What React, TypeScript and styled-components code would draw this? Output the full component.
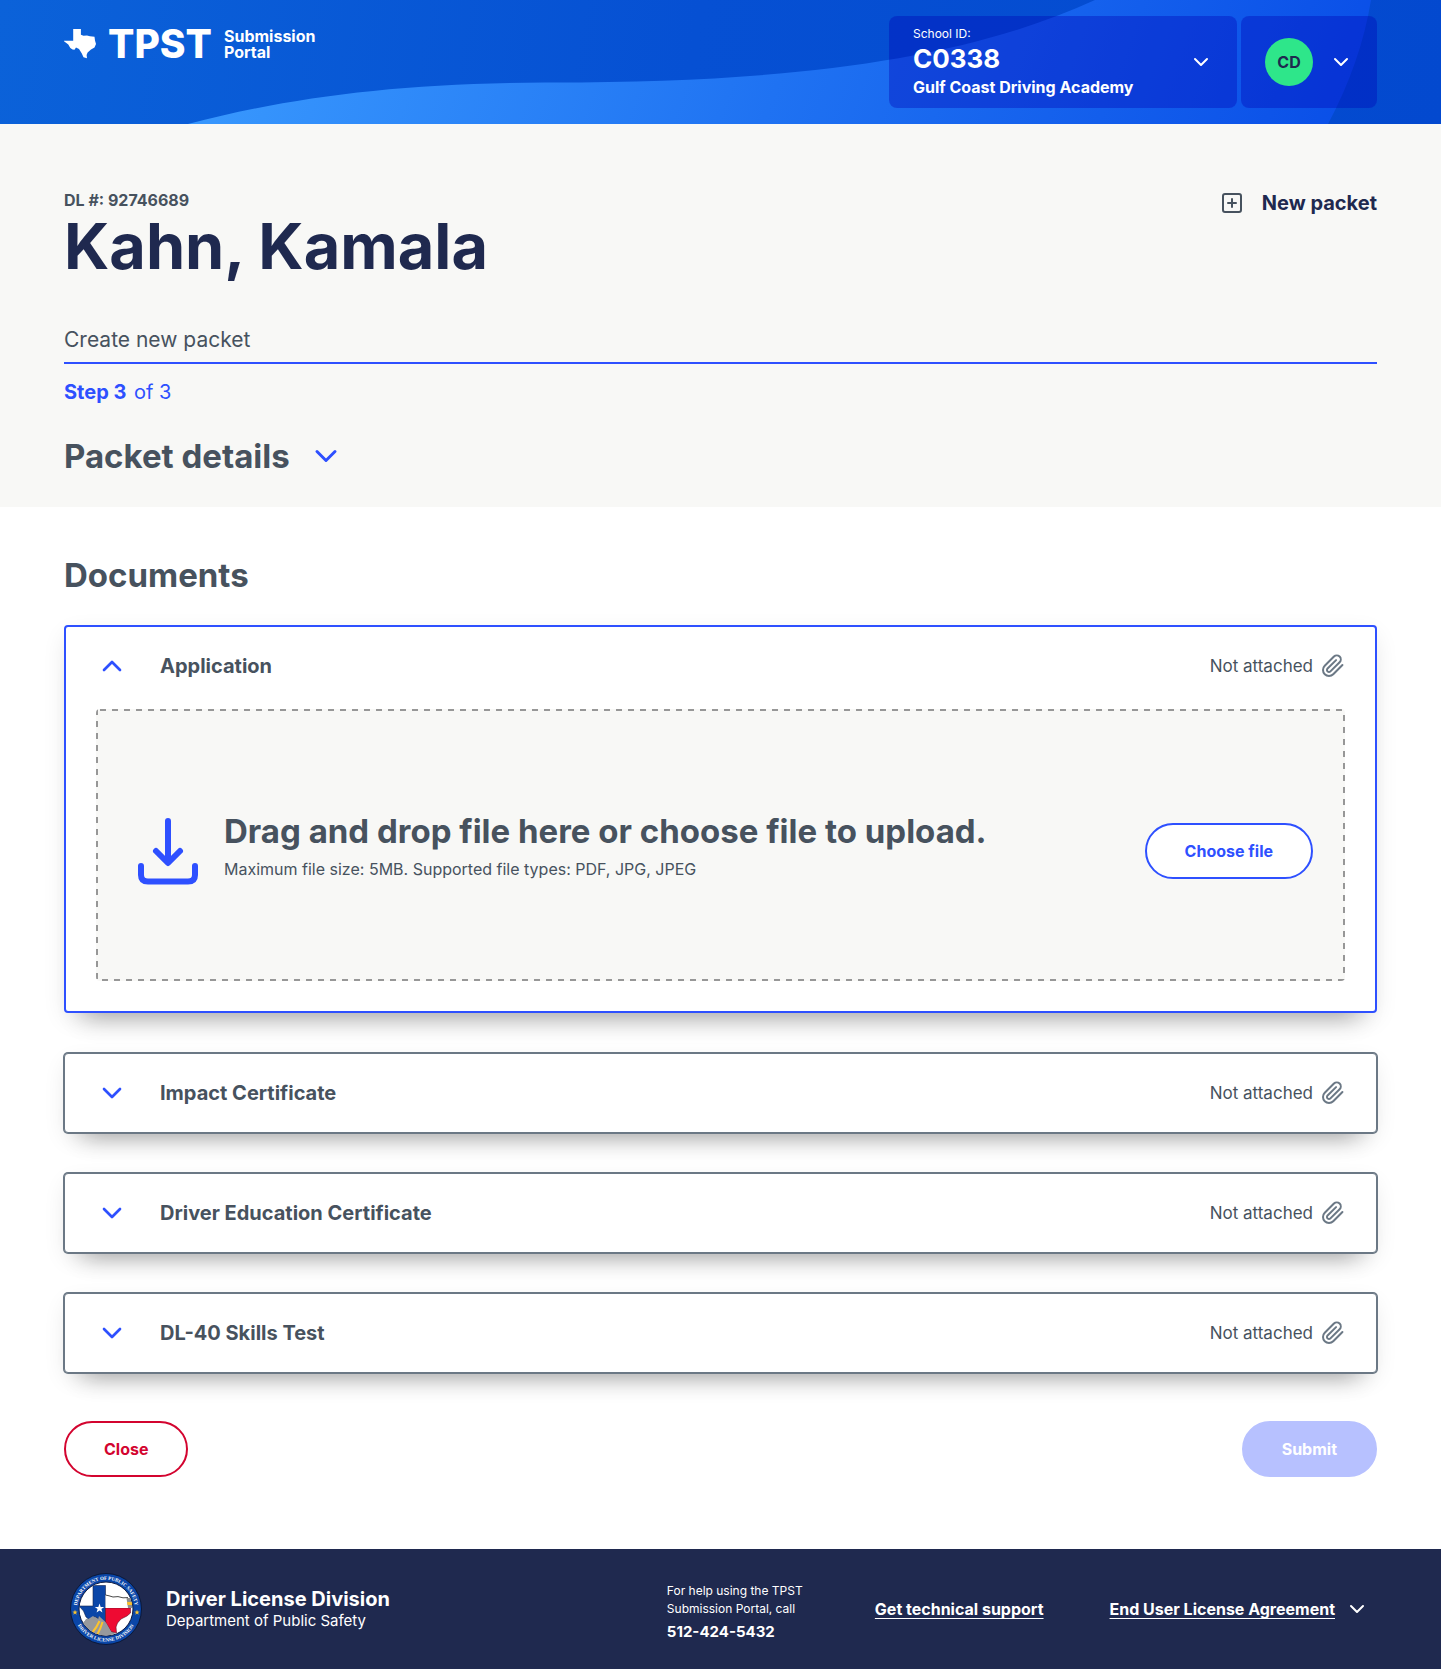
import React, { useState } from "react";
import styled, { createGlobalStyle, css } from "styled-components";
import {
  FiChevronDown,
  FiChevronUp,
  FiPaperclip,
  FiPlusSquare,
} from "react-icons/fi";

const color = {
  navy: "#1f294f",
  slate: "#47525e",
  steel: "#6b7885",
  blue: "#2e50ff",
  red: "#d3042f",
  green: "#2ee68a",
  paper: "#f8f8f6",
  dash: "#979797",
  disabled: "#b7c1ff",
};

const GlobalStyle = createGlobalStyle`
  *, *::before, *::after { box-sizing: border-box; }
  body {
    margin: 0;
    background: #fff;
    color: ${color.slate};
    font-family: Inter, "Noto Sans", "Liberation Sans", sans-serif;
    font-size: 16px;
    line-height: 24px;
  }
  h1, h2, h3, p { margin: 0; }
  button { font-family: inherit; cursor: pointer; }
`;

const Header = styled.header`
  position: relative;
  display: flex;
  justify-content: space-between;
  align-items: flex-start;
  padding: 16px 64px;
  color: #fff;
  background: linear-gradient(100deg, #0b62d9 0%, #0650d3 48%, #0349cf 100%);
`;

const Wave = styled.svg`
  position: absolute;
  inset: 0;
  width: 100%;
  height: 100%;
`;

const Brand = styled.a`
  position: relative;
  display: flex;
  align-items: center;
  gap: 12px;
  margin-top: 11px;
  color: #fff;
  text-decoration: none;
`;

const BrandName = styled.span`
  font-size: 39px;
  line-height: 34px;
  font-weight: 800;
`;

const BrandSub = styled.span`
  font-weight: 700;
  font-size: 16px;
  line-height: 16px;
`;

const HeaderMenus = styled.nav`
  position: relative;
  display: flex;
  gap: 4px;
`;

const MenuButton = styled.button<{ $width: number }>`
  display: flex;
  align-items: center;
  justify-content: space-between;
  width: ${(p) => p.$width}px;
  min-height: 92px;
  padding: 8px 24px;
  border: 0;
  border-radius: 8px;
  background: rgba(0, 0, 180, 0.35);
  color: #fff;
  text-align: left;
`;

const School = styled.span`
  display: flex;
  flex-direction: column;
`;
const SchoolLabel = styled.span`
  font-size: 12px;
  line-height: 20px;
`;
const SchoolId = styled.span`
  font-size: 26px;
  line-height: 30px;
  font-weight: 700;
`;
const SchoolName = styled.span`
  font-size: 16px;
  line-height: 26px;
  font-weight: 700;
`;

const Avatar = styled.span`
  display: grid;
  place-items: center;
  width: 48px;
  height: 48px;
  border-radius: 50%;
  background: ${color.green};
  color: ${color.navy};
  font-size: 16px;
  font-weight: 700;
`;

const Hero = styled.section`
  padding: 64px 64px 31px;
  background: ${color.paper};
`;

const HeroTop = styled.div`
  display: flex;
  justify-content: space-between;
  align-items: flex-start;
`;

const LicenseNumber = styled.p`
  font-size: 16px;
  line-height: 24px;
  font-weight: 700;
`;

const PersonName = styled.h1`
  font-size: 63px;
  line-height: 68px;
  font-weight: 700;
  color: ${color.navy};
`;

const NewPacket = styled.button`
  display: flex;
  align-items: center;
  gap: 18px;
  padding: 0;
  border: 0;
  background: none;
  font-size: 20px;
  line-height: 30px;
  font-weight: 700;
  color: ${color.navy};
  svg {
    color: ${color.slate};
  }
`;

const FlowName = styled.p`
  margin-top: 46px;
  padding-bottom: 8px;
  border-bottom: 2px solid ${color.blue};
  font-size: 21px;
  line-height: 28px;
`;

const Step = styled.p`
  margin-top: 14px;
  font-size: 20px;
  line-height: 28px;
  color: ${color.blue};
  strong {
    margin-right: 2px;
  }
`;

const SectionTitle = styled.h2`
  font-size: 33px;
  line-height: 40px;
  font-weight: 700;
`;

const DetailsToggle = styled.button`
  display: flex;
  align-items: center;
  gap: 18px;
  margin-top: 30px;
  padding: 0;
  border: 0;
  background: none;
  color: ${color.slate};
  svg {
    color: ${color.blue};
  }
`;

const Main = styled.main`
  padding: 48px 64px 72px;
`;

const Documents = styled.div`
  display: flex;
  flex-direction: column;
  gap: 40px;
  margin-top: 30px;
`;

const Card = styled.section<{ $open: boolean }>`
  border-radius: 4px;
  background: #fff;
  ${(p) =>
    p.$open
      ? css`
          border: 2px solid ${color.blue};
          padding-bottom: 30px;
          box-shadow: 0 24px 24px -20px rgba(0, 0, 0, 0.3),
            0 8px 24px -4px rgba(0, 0, 0, 0.12);
        `
      : css`
          border: 1px solid ${color.steel};
          padding: 0 1px;
          box-shadow: 0 0 0 1px ${color.steel},
            0 24px 24px -20px rgba(0, 0, 0, 0.3),
            0 8px 24px -4px rgba(0, 0, 0, 0.12);
        `}
`;

const CardHeader = styled.button`
  display: flex;
  align-items: center;
  width: 100%;
  min-height: 78px;
  padding: 0 30px;
  border: 0;
  background: none;
  color: ${color.slate};
  text-align: left;
`;

const Toggle = styled.span`
  display: flex;
  margin-right: 32px;
  color: ${color.blue};
`;

const CardTitle = styled.span`
  flex: 1;
  font-size: 20px;
  line-height: 28px;
  font-weight: 700;
`;

const Status = styled.span`
  display: flex;
  align-items: center;
  gap: 8px;
  font-size: 17px;
  svg {
    color: ${color.steel};
  }
`;

const dashX = `linear-gradient(90deg, ${color.dash} 50%, transparent 50%)`;
const dashY = `linear-gradient(180deg, ${color.dash} 50%, transparent 50%)`;

const DropZone = styled.div`
  display: flex;
  align-items: center;
  min-height: 272px;
  margin: 4px 30px 0;
  padding: 14px 32px 2px;
  border-radius: 4px;
  background-color: ${color.paper};
  background-image: ${dashX}, ${dashX}, ${dashY}, ${dashY};
  background-size: 12px 2px, 12px 2px, 2px 12px, 2px 12px;
  background-position: 4px 0, 6px 100%, 0 0, 100% 6px;
  background-repeat: repeat-x, repeat-x, repeat-y, repeat-y;
`;

const DropText = styled.div`
  flex: 1;
  margin: 0 16px;
  padding-bottom: 10px;
`;

const DropHint = styled.p`
  margin-top: 6px;
  font-size: 16px;
  line-height: 24px;
`;

const Pill = styled.button<{ $tone: "blue" | "red" | "solid" }>`
  min-height: 56px;
  padding: 0 38px;
  border: 2px solid
    ${(p) => (p.$tone === "solid" ? color.disabled : color[p.$tone])};
  border-radius: 28px;
  background: ${(p) => (p.$tone === "solid" ? color.disabled : "#fff")};
  color: ${(p) => (p.$tone === "solid" ? "#fff" : color[p.$tone])};
  font-size: 16px;
  line-height: 24px;
  font-weight: 700;
`;

const Actions = styled.div`
  display: flex;
  justify-content: space-between;
  margin-top: 48px;
`;

const Footer = styled.footer`
  display: flex;
  align-items: center;
  justify-content: space-between;
  min-height: 120px;
  padding: 0 72px 0 70px;
  background: ${color.navy};
  color: #fff;
`;

const Agency = styled.div`
  display: flex;
  align-items: center;
  gap: 24px;
`;

const AgencyName = styled.p`
  font-size: 20px;
  line-height: 24px;
  font-weight: 700;
`;

const AgencyParent = styled.p`
  font-size: 15px;
  line-height: 20px;
`;

const FooterLinks = styled.div`
  display: flex;
  align-items: center;
  gap: 66px;
`;

const Help = styled.div`
  min-width: 142px;
  padding-top: 6px;
  font-size: 12px;
  line-height: 18px;
`;

const HelpPhone = styled.p`
  margin-top: 4px;
  font-size: 15px;
  line-height: 20px;
  font-weight: 700;
`;

const FooterLink = styled.a`
  color: #fff;
  font-size: 16px;
  font-weight: 700;
  text-decoration: underline;
  text-decoration-thickness: 1px;
  text-underline-offset: 3px;
`;

const Agreement = styled.div`
  display: flex;
  align-items: center;
  gap: 10px;
`;

const HeaderWave = () => (
  <Wave viewBox="0 0 1441 124" preserveAspectRatio="none" aria-hidden="true">
    <defs>
      <linearGradient
        id="wave"
        gradientUnits="userSpaceOnUse"
        x1="260"
        y1="0"
        x2="1330"
        y2="400"
      >
        <stop offset="0" stopColor="#3796fd" />
        <stop offset="0.45" stopColor="#1f72f2" />
        <stop offset="1" stopColor="#074ae6" />
      </linearGradient>
    </defs>
    <path
      d="M188 124C290 97 400 83 545 82.500C780 83 960 62 1095 0H1371Q1361 62 1328 124Z"
      fill="url(#wave)"
    />
  </Wave>
);

const TexasMark = () => (
  <svg width="32" height="30" viewBox="0 0 32 30" aria-hidden="true">
    <path
      fill="#fff"
      d="M9.200 0H16.900V5.800L19.500 6.800L23 6.500L26 7.200L30.500 7.800L31 11.500L32 15L30.500 18.500L27 20.500L23.600 23.500L22.600 26L23 29.300L19.500 28.300L17.800 24.500L15 20L12 18.600L10.500 20.800L8.600 20.600L6.300 19L4.300 15.500L0 12.300V11.700H9.200Z"
    />
  </svg>
);

const DownloadIcon = () => (
  <svg
    width="80"
    height="80"
    viewBox="0 0 80 80"
    fill="none"
    stroke={color.blue}
    strokeWidth="6"
    strokeLinecap="round"
    strokeLinejoin="round"
    aria-hidden="true"
  >
    <path d="M40 10V51M28 40L40 52L52 40" />
    <path d="M13 55V64Q13 70.500 20 70.500H60Q67 70.500 67 64V55" />
  </svg>
);

const Star = ({ x, y, r, fill }: { x: number; y: number; r: number; fill: string }) => {
  const points = Array.from({ length: 10 }, (_, i) => {
    const radius = i % 2 ? r * 0.4 : r;
    const angle = (Math.PI / 5) * i - Math.PI / 2;
    return `${x + radius * Math.cos(angle)},${y + radius * Math.sin(angle)}`;
  }).join(" ");
  return <polygon points={points} fill={fill} />;
};

const Seal = () => (
  <svg
    width="72"
    height="72"
    viewBox="0 0 72 72"
    role="img"
    aria-label="Department of Public Safety seal"
  >
    <defs>
      <path id="sealTop" d="M7.300 40A29 29 0 1 1 64.700 40" />
      <path id="sealBottom" d="M3.500 36A32.500 32.500 0 0 0 68.500 36" />
      <clipPath id="sealDisc">
        <circle cx="36" cy="36" r="26.500" />
      </clipPath>
    </defs>
    <circle cx="36" cy="36" r="35.500" fill="#0a46a8" stroke="#0b1838" />
    <circle cx="36" cy="36" r="27" fill="#fff" stroke="#101c40" />
    <g clipPath="url(#sealDisc)">
      <path d="M12 52L16 46L26 43L36 50L46 62H12Z" fill="#97999c" />
      <path
        d="M23 12.500H35.500V58L31 52L29 46L25 43.500L20 47L16 44L13.500 38L9 33H23Z"
        fill="#0a46a8"
        stroke="#14244c"
        strokeWidth="0.600"
      />
      <path
        d="M35.500 35H60.500V40L57 43L51 46L47.500 50L46 54L46.500 60L41 58.500L38 53L35.500 49Z"
        fill="#ee0a32"
        stroke="#5d1228"
        strokeWidth="0.600"
      />
      <path
        d="M35.500 22L39 22.800L43 24L48 23.600L53 24.800L58 24.600L60 26V35H35.500Z"
        fill="#fff"
      />
      <path
        d="M35.500 22L39 22.800L43 24L48 23.600L53 24.800L58 24.600"
        fill="none"
        stroke="#333"
        strokeWidth="0.900"
      />
      <path d="M56.500 25H62V35H58Z" fill="#8d8f90" />
      <path d="M57 29H62V32H57.500Z" fill="#f9bf2c" />
      <path d="M12 50L23 43L29 48L27 62H14Z" fill="#97999c" />
      <path d="M29 43L35.500 49L42 60L36 64L24 62Z" fill="#97999c" />
      <path
        d="M29.500 48Q27 54 22 60M32.500 49Q31 55 27 62"
        fill="none"
        stroke="#fbc42d"
        strokeWidth="2"
      />
    </g>
    <Star x={29.5} y={35.5} r={5} fill="#fff" />
    <Star x={5} y={39.5} r={2.8} fill="#fbc42d" />
    <Star x={67} y={39.5} r={2.8} fill="#fbc42d" />
    <g
      fill="#fff"
      fontFamily='"Liberation Serif", serif'
      fontWeight="700"
      fontSize="5"
      textAnchor="middle"
    >
      <text>
        <textPath href="#sealTop" startOffset="50%">
          DEPARTMENT OF PUBLIC SAFETY
        </textPath>
      </text>
      <text>
        <textPath href="#sealBottom" startOffset="50%">
          DRIVER LICENSE DIVISION
        </textPath>
      </text>
    </g>
  </svg>
);

const documentNames = [
  "Application",
  "Impact Certificate",
  "Driver Education Certificate",
  "DL-40 Skills Test",
];

const UploadArea = () => (
  <DropZone>
    <DownloadIcon />
    <DropText>
      <SectionTitle as="h3">
        Drag and drop file here or choose file to upload.
      </SectionTitle>
      <DropHint>
        Maximum file size: 5MB. Supported file types: PDF, JPG, JPEG
      </DropHint>
    </DropText>
    <Pill type="button" $tone="blue">
      Choose file
    </Pill>
  </DropZone>
);

export default function App() {
  const [openDocument, setOpenDocument] = useState<string | null>("Application");

  return (
    <>
      <GlobalStyle />
      <Header>
        <HeaderWave />
        <Brand href="#">
          <TexasMark />
          <BrandName>TPST</BrandName>
          <BrandSub>
            Submission
            <br />
            Portal
          </BrandSub>
        </Brand>
        <HeaderMenus>
          <MenuButton type="button" $width={348}>
            <School>
              <SchoolLabel>School ID:</SchoolLabel>
              <SchoolId>C0338</SchoolId>
              <SchoolName>Gulf Coast Driving Academy</SchoolName>
            </School>
            <FiChevronDown size={24} />
          </MenuButton>
          <MenuButton type="button" $width={136}>
            <Avatar>CD</Avatar>
            <FiChevronDown size={24} />
          </MenuButton>
        </HeaderMenus>
      </Header>

      <Hero>
        <HeroTop>
          <div>
            <LicenseNumber>DL #: 92746689</LicenseNumber>
            <PersonName>Kahn, Kamala</PersonName>
          </div>
          <NewPacket type="button">
            <FiPlusSquare size={24} />
            New packet
          </NewPacket>
        </HeroTop>
        <FlowName>Create new packet</FlowName>
        <Step>
          <strong>Step 3</strong> of 3
        </Step>
        <DetailsToggle type="button" aria-expanded={false}>
          <SectionTitle as="span">Packet details</SectionTitle>
          <FiChevronDown size={36} />
        </DetailsToggle>
      </Hero>

      <Main>
        <SectionTitle>Documents</SectionTitle>
        <Documents>
          {documentNames.map((name) => {
            const open = name === openDocument;
            return (
              <Card key={name} $open={open}>
                <CardHeader
                  type="button"
                  aria-expanded={open}
                  onClick={() => setOpenDocument(open ? null : name)}
                >
                  <Toggle>
                    {open ? <FiChevronUp size={32} /> : <FiChevronDown size={32} />}
                  </Toggle>
                  <CardTitle>{name}</CardTitle>
                  <Status>
                    Not attached
                    <FiPaperclip size={24} />
                  </Status>
                </CardHeader>
                {open && <UploadArea />}
              </Card>
            );
          })}
        </Documents>
        <Actions>
          <Pill type="button" $tone="red">
            Close
          </Pill>
          <Pill type="button" $tone="solid" disabled>
            Submit
          </Pill>
        </Actions>
      </Main>

      <Footer>
        <Agency>
          <Seal />
          <div>
            <AgencyName>Driver License Division</AgencyName>
            <AgencyParent>Department of Public Safety</AgencyParent>
          </div>
        </Agency>
        <FooterLinks>
          <Help>
            <p>For help using the TPST</p>
            <p>Submission Portal, call</p>
            <HelpPhone>512-424-5432</HelpPhone>
          </Help>
          <FooterLink href="#">Get technical support</FooterLink>
          <Agreement>
            <FooterLink href="#">End User License Agreement</FooterLink>
            <FiChevronDown size={24} />
          </Agreement>
        </FooterLinks>
      </Footer>
    </>
  );
}
